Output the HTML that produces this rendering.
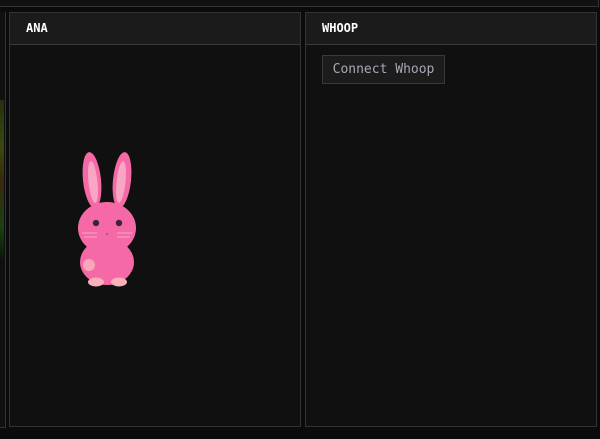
<!DOCTYPE html>
<html><head><style>
body{margin:0;width:600px;height:439px;background:#0b0b0b;position:relative;overflow:hidden;font-family:"DejaVu Sans Mono","Liberation Mono",monospace}
.top{position:absolute;left:0;top:0;width:598px;height:6px;border-bottom:1px solid #333;border-right:1px solid #333;background:#111}
.panel{position:absolute;top:12px;height:415px;background:#101010;border:1px solid #333;box-sizing:border-box}
.hd{height:32px;background:#1b1b1b;border-bottom:1px solid #3a3a3a;box-sizing:border-box;color:#fff;font-weight:bold;font-size:12px;line-height:31px;padding-left:16px}
.btn{position:absolute;left:16px;top:42px;width:123px;height:29px;box-sizing:border-box;border:1px solid #3a3a3a;background:#1c1c1c;color:#a8a8b8;font-size:13px;line-height:27px;text-align:center}
</style></head><body>
<div class="top"></div>
<div style="position:absolute;left:0;top:12px;width:5px;height:415px;background:#101010;border-right:1px solid #333;border-bottom:1px solid #333"></div>
<div style="position:absolute;left:0;top:100px;width:4px;height:160px;background:linear-gradient(#263010,#3a4a10 30%,#3a2810 50%,#1c4010 80%,#0a140a)"></div>
<div class="panel" style="left:9px;width:292px"><div class="hd">ANA</div></div>
<div class="panel" style="left:305px;width:292px"><div class="hd">WHOOP</div><div class="btn">Connect Whoop</div></div>
<svg style="position:absolute;left:70px;top:145px" width="80" height="150" viewBox="70 145 80 150">
<ellipse cx="92" cy="180" rx="9" ry="28" fill="#f56aa6" transform="rotate(-6 92 180)"/>
<ellipse cx="122" cy="180" rx="9" ry="28" fill="#f56aa6" transform="rotate(6 122 180)"/>
<ellipse cx="93" cy="182" rx="4.5" ry="21" fill="#f9a6c4" transform="rotate(-6 93 182)"/>
<ellipse cx="121" cy="182" rx="4.5" ry="21" fill="#f9a6c4" transform="rotate(6 121 182)"/>
<ellipse cx="107" cy="262" rx="27" ry="23" fill="#f56aa6"/>
<ellipse cx="107" cy="228" rx="29" ry="26" fill="#f56aa6"/>
<circle cx="89" cy="265" r="6" fill="#f9a6b8"/>
<ellipse cx="96" cy="282" rx="8" ry="4.5" fill="#f9b0b8"/>
<ellipse cx="119" cy="282" rx="8" ry="4.5" fill="#f9b0b8"/>
<circle cx="96" cy="223" r="3.2" fill="#3a2440"/><circle cx="119" cy="223" r="3.2" fill="#3a2440"/>
<path d="M82 233h15M84 237h13M117 233h15M117 237h13" stroke="#f9a6c4" stroke-width="1"/>
<circle cx="107" cy="234" r="1.2" fill="#d04888"/>
</svg>
</body></html>
